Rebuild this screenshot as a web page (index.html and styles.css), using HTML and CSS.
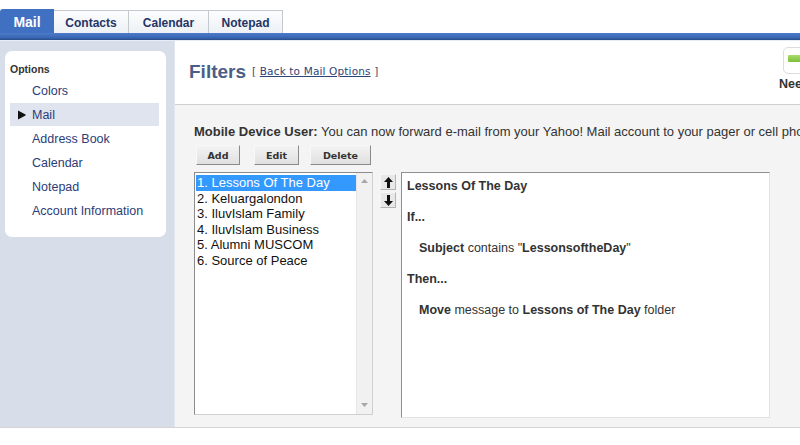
FILE: index.html
```html
<!DOCTYPE html>
<html>
<head>
<meta charset="utf-8">
<link rel="stylesheet" href="styles.css">
</head>
<body>
<div class="page">
  <nav class="tabs">
    <div class="tab tab-active">Mail</div>
    <div class="tab">Contacts</div>
    <div class="tab">Calendar</div>
    <div class="tab">Notepad</div>
  </nav>
  <div class="bar"></div>
  <div class="layout">
    <aside class="sidebar">
      <div class="card">
        <div class="card-title">Options</div>
        <ul class="menu">
          <li class="menu-item">Colors</li>
          <li class="menu-item menu-current">
            <svg class="bullet" width="9" height="10" viewBox="0 0 9 10"><path d="M1 0.5 L1 9.5 L8.5 5.5 Q9 5 8.5 4.5 Z" fill="#111"/></svg>Mail</li>
          <li class="menu-item">Address Book</li>
          <li class="menu-item">Calendar</li>
          <li class="menu-item">Notepad</li>
          <li class="menu-item">Account Information</li>
        </ul>
      </div>
    </aside>
    <main class="main">
      <header class="head">
        <h1 class="title">Filters</h1>
        <span class="back">[ <a class="back-link">Back to Mail Options</a> ]</span>
        <div class="promo">
          <div class="promo-box"><div class="promo-bar"></div></div>
          <div class="promo-text">Nee</div>
        </div>
      </header>
      <section class="content">
        <p class="notice"><b>Mobile Device User:</b> You can now forward e-mail from your Yahoo! Mail account to your pager or cell phone.</p>
        <div class="buttons">
          <button class="btn btn-add">Add</button>
          <button class="btn btn-edit">Edit</button>
          <button class="btn btn-del">Delete</button>
        </div>
        <div class="work">
          <div class="listbox">
            <ul class="list">
              <li class="list-item list-sel">1. Lessons Of The Day</li>
              <li class="list-item">2. Keluargalondon</li>
              <li class="list-item">3. IluvIslam Family</li>
              <li class="list-item">4. IluvIslam Business</li>
              <li class="list-item">5. Alumni MUSCOM</li>
              <li class="list-item">6. Source of Peace</li>
            </ul>
            <div class="scroll">
              <svg width="7" height="4" viewBox="0 0 7 4"><path d="M0 4 L3.5 0 L7 4 Z" fill="#a8a8a8"/></svg>
              <svg width="7" height="4" viewBox="0 0 7 4"><path d="M0 0 L3.5 4 L7 0 Z" fill="#a8a8a8"/></svg>
            </div>
          </div>
          <div class="movers">
            <div class="mover"><svg width="9" height="11" viewBox="0 0 9 11"><path d="M4.5 0 L9 5 L6 5 L6 11 L3 11 L3 5 L0 5 Z" fill="#111"/></svg></div>
            <div class="mover"><svg width="9" height="11" viewBox="0 0 9 11"><path d="M4.5 11 L9 6 L6 6 L6 0 L3 0 L3 6 L0 6 Z" fill="#111"/></svg></div>
          </div>
          <div class="detail">
            <div class="d-row"><b>Lessons Of The Day</b></div>
            <div class="d-row"><b>If...</b></div>
            <div class="d-row d-indent"><b>Subject</b> contains "<b>LessonsoftheDay</b>"</div>
            <div class="d-row"><b>Then...</b></div>
            <div class="d-row d-indent"><b>Move</b> message to <b>Lessons of The Day</b> folder</div>
          </div>
        </div>
      </section>
    </main>
  </div>
  <div class="foot"></div>
</div>
</body>
</html>
```

FILE: styles.css
```css
* { box-sizing: border-box; }
html, body { margin: 0; padding: 0; }
body {
  width: 800px;
  height: 445px;
  overflow: hidden;
  background: #fff;
  font-family: "Liberation Sans", Arial, sans-serif;
  color: #333;
}
.page { width: 800px; }

.tabs {
  display: grid;
  grid-template-columns: 54px 75px 80px 74px;
  padding-top: 10px;
  height: 33px;
}
.tab {
  height: 23px;
  border: 1px solid #c4c8cf;
  border-left: none;
  border-bottom: none;
  background: linear-gradient(#fbfcfd, #eef1f5);
  font-weight: bold;
  font-size: 12px;
  color: #1f3565;
  display: flex;
  align-items: center;
  justify-content: center;
  padding-top: 1px;
}
.tab-active {
  height: 24px;
  margin-top: -1px;
  border: none;
  border-radius: 3px 0 0 0;
  background: #3f70c2;
  color: #fff;
  font-size: 14px;
}
.bar {
  height: 7px;
  background: linear-gradient(#4c7bcb, #3b69b6 70%, #30599e);
  border-bottom: 1px solid #2b528f;
}

.layout {
  display: flex;
  height: 387px;
}
.sidebar {
  width: 174px;
  flex-shrink: 0;
  background: #d7dde9;
  padding: 10px 0 0 5px;
  border-top: 1px solid #e7ecf5;
}
.card {
  width: 161px;
  height: 186px;
  background: #fff;
  border-radius: 7px;
  padding: 11px 7px 0 5px;
}
.card-title {
  font-size: 10.5px;
  font-weight: bold;
  color: #333;
  height: 17px;
  line-height: 14px;
}
.menu { list-style: none; margin: 0; padding: 0; }
.menu-item {
  height: 24px;
  line-height: 24px;
  font-size: 12.5px;
  color: #2c3c78;
  padding-left: 22px;
  position: relative;
}
.menu-current {
  background: #dfe4ef;
  height: 23px;
  line-height: 25px;
  margin-bottom: 1px;
}
.bullet {
  position: absolute;
  left: 7px;
  top: 7px;
}

.main {
  flex: 1;
  display: flex;
  flex-direction: column;
  min-width: 0;
  border-left: 1px solid #e3e6ec;
}
.head {
  height: 65px;
  background: #fff;
  border-bottom: 1px solid #cfcfcf;
  display: flex;
  align-items: flex-start;
  padding-left: 14px;
  border-top: 1px solid #e7ecf5;
}
.title {
  margin: 19px 0 0 0;
  font-size: 19px;
  line-height: 24px;
  font-weight: bold;
  color: #4b5f86;
}
.back {
  margin: 24px 0 0 6px;
  font-family: "DejaVu Sans", Verdana, sans-serif;
  font-size: 10.5px;
  letter-spacing: 0.15px;
  color: #3a4a6e;
  white-space: nowrap;
}
.back-link {
  color: #2f4576;
  text-decoration: underline;
}
.promo {
  margin-left: auto;
  width: 21px;
  flex-shrink: 0;
  white-space: nowrap;
  padding-top: 6px;
}
.promo-box {
  width: 40px;
  height: 27px;
  margin-left: 4px;
  border: 1px solid #dcdcdc;
  border-radius: 5px;
  padding: 7px 0 0 4px;
  background: #fff;
}
.promo-bar {
  width: 40px;
  height: 7px;
  background: linear-gradient(#a9dd6c, #7cbf3a);
  border-radius: 1px;
}
.promo-text {
  margin-top: 3px;
  font-size: 12.5px;
  font-weight: bold;
  color: #333;
}

.content {
  flex: 1;
  background: #f4f4f4;
  padding: 19px 0 0 19px;
}
.notice {
  margin: 0;
  font-size: 13px;
  line-height: 15px;
  white-space: nowrap;
  color: #333;
}
.notice b { color: #333; }
.buttons {
  display: flex;
  margin-top: 6px;
  padding-left: 2px;
}
.btn {
  height: 20px;
  padding: 0 10px;
  font-family: "DejaVu Sans", Verdana, sans-serif;
  font-size: 9.5px;
  font-weight: bold;
  color: #333;
  background: linear-gradient(#f3f3f3, #e0e0e0);
  border: 1px solid;
  border-color: #f8f8f8 #8a8a8a #8a8a8a #f8f8f8;
  border-radius: 0;
  cursor: default;
}
.btn-add { width: 44px; margin-right: 14px; }
.btn-edit { width: 45px; margin-right: 11px; }
.btn-del { width: 61px; }

.work {
  display: flex;
  align-items: flex-start;
  margin-top: 7px;
}
.listbox {
  width: 179px;
  height: 243px;
  display: flex;
  border: 1px solid #8c8c8c;
  border-right-color: #cfcfcf;
  border-bottom-color: #cfcfcf;
  background: #fff;
}
.list {
  list-style: none;
  margin: 0;
  padding: 2px 0 0 1px;
  flex: 1;
}
.list-item {
  font-size: 13px;
  line-height: 15.6px;
  color: #111;
  padding-left: 1px;
  white-space: nowrap;
}
.list-sel {
  background: #3399ff;
  color: #fff;
}
.scroll {
  width: 16px;
  background: #f1f1f1;
  border-left: 1px solid #e6e6e6;
  display: flex;
  flex-direction: column;
  justify-content: space-between;
  align-items: center;
  padding: 6px 0 7px;
}
.movers {
  display: flex;
  flex-direction: column;
  gap: 2px;
  margin: 2px 0 0 7px;
}
.mover {
  width: 16px;
  height: 16px;
  background: #e8e8e8;
  border: 1px solid;
  border-color: #f6f6f6 #b4b4b4 #b4b4b4 #f6f6f6;
  display: flex;
  align-items: center;
  justify-content: center;
}
.detail {
  width: 369px;
  height: 246px;
  margin-left: 5px;
  background: #fff;
  border: 1px solid;
  border-color: #8f8f8f #e2e2e2 #e2e2e2 #8f8f8f;
  padding: 6px 0 0 5px;
  display: flex;
  flex-direction: column;
  gap: 16px;
  font-size: 12.5px;
  line-height: 15px;
  color: #333;
}
.d-indent { padding-left: 12px; }
.d-row b { color: #333; }

.foot {
  height: 18px;
  border-top: 1px solid #d4d4d4;
  background: #fff;
}
```
